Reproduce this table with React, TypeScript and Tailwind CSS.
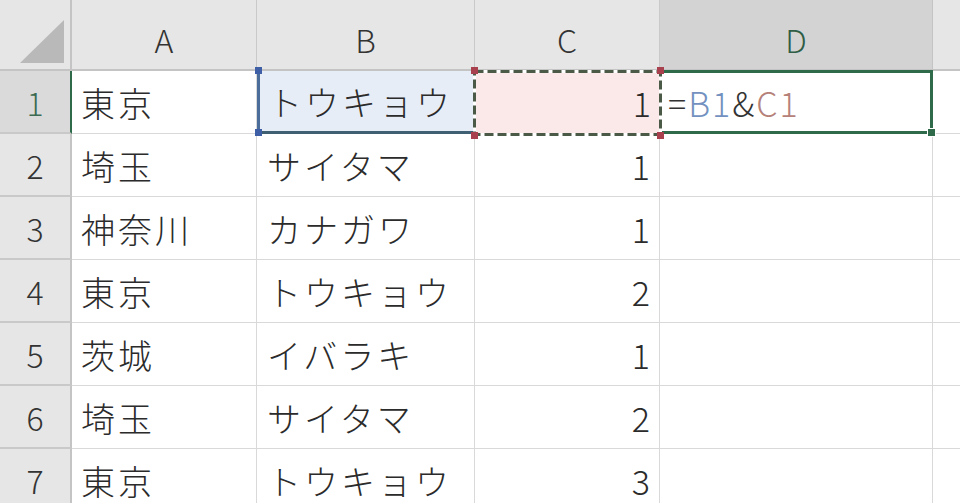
import React from 'react';

const font = { fontFamily: '"Noto Sans CJK JP", "Noto Sans", sans-serif' };

const rows: [string, string, string][] = [
  ['東京', 'トウキョウ', '1'],
  ['埼玉', 'サイタマ', '1'],
  ['神奈川', 'カナガワ', '1'],
  ['東京', 'トウキョウ', '2'],
  ['茨城', 'イバラキ', '1'],
  ['埼玉', 'サイタマ', '2'],
  ['東京', 'トウキョウ', '3'],
];

// small square handle on a reference border corner
const Handle = ({ className }: { className: string }) => (
  <div className={`absolute w-[7px] h-[7px] z-30 ${className}`} />
);

const App = () => {
  return (
    <div className="w-[960px] h-[503px] overflow-hidden bg-white text-[#2b2b2b] font-light" style={font}>
      <div className="grid grid-cols-[72px_185px_218px_185px_273px_1fr] grid-rows-[71px_repeat(7,63px)]">
        {/* column headers */}
        <div className="bg-[#e6e6e6] border-r-2 border-b-2 border-[#c4c4c4] flex items-end justify-end pr-[6px] pb-[6px]">
          <svg width="44" height="43">
            <polygon points="0,43 44,43 44,0" fill="#b9b9b9" />
          </svg>
        </div>
        {['A', 'B', 'C'].map((c) => (
          <div
            key={c}
            className="bg-[#e6e6e6] border-r border-b-2 border-r-[#c9c9c9] border-b-[#c4c4c4] flex items-center justify-center pt-[8px] text-[32px] text-[#333]"
          >
            {c}
          </div>
        ))}
        <div className="bg-[#d3d3d3] border-r border-b-2 border-r-[#c4c4c4] border-b-[#c4c4c4] flex items-center justify-center pt-[8px] text-[32px] text-[#2f5d45]">
          D
        </div>
        <div className="bg-[#e6e6e6] border-b-2 border-[#c4c4c4]" />

        {rows.map(([a, b, c], i) => {
          const first = i === 0;
          return (
            <React.Fragment key={i}>
              <div
                className={`flex items-center justify-center text-[32px] border-b-2 border-r-2 border-b-[#c9c9c9] ${
                  first ? 'bg-[#dadada] text-[#3c6a52] border-r-[#2f6b4b]' : 'bg-[#e6e6e6] text-[#333] border-r-[#c4c4c4]'
                }`}
              >
                {i + 1}
              </div>
              <div className="flex items-center pl-[9px] text-[34px] tracking-[3px] border-r border-b border-[#d9d9d9]">{a}</div>
              {first ? (
                <div className="relative flex items-center pl-[8px] text-[34px] tracking-[3px] bg-[#e7edf7] border-l-[3px] border-b-[3px] border-r border-l-[#4b6d9a] border-b-[#3f6073] border-r-[#d9d9d9]">
                  {b}
                  <Handle className="-left-[5px] -top-[4px] bg-[#3e5fa5]" />
                  <Handle className="-left-[5px] -bottom-[5px] bg-[#3e5fa5]" />
                </div>
              ) : (
                <div className="flex items-center pl-[10px] text-[34px] tracking-[3px] border-r border-b border-[#d9d9d9]">{b}</div>
              )}
              {first ? (
                <div className="relative flex items-center justify-end pr-[9px] text-[34px] bg-[#fbe9e9]">
                  {c}
                  <svg className="absolute inset-0 z-20 overflow-visible" width="185" height="63">
                    <rect x="-0.5" y="0.5" width="186" height="63" fill="none" stroke="#ffffff" strokeWidth="3" />
                    <rect x="-0.5" y="0.5" width="186" height="63" fill="none" stroke="#4a5a46" strokeWidth="3" strokeDasharray="9 4" />
                  </svg>
                  <Handle className="-left-[4px] -top-[4px] bg-[#a8404e]" />
                  <Handle className="-left-[4px] -bottom-[5px] bg-[#a8404e]" />
                  <Handle className="-right-[4px] -top-[4px] bg-[#a8404e]" />
                  <Handle className="-right-[4px] -bottom-[5px] bg-[#a8404e]" />
                </div>
              ) : (
                <div className="flex items-center justify-end pr-[9px] text-[34px] border-r border-b border-[#d9d9d9]">{c}</div>
              )}
              {first ? (
                <div className="relative flex items-center pl-[8px] text-[34px] tracking-[2px] border-t-[3px] border-r-[3px] border-b-[3px] border-[#2f6b4b] -mt-[1px]">
                  <span>
                    <span className="text-[#333]">=</span>
                    <span className="text-[#7391c0]">B1</span>
                    <span className="text-[#333]">&amp;</span>
                    <span className="text-[#b58178]">C1</span>
                  </span>
                  <div className="absolute -right-[6px] -bottom-[6px] w-[9px] h-[9px] bg-[#2f6b4b] border border-white z-30" />
                </div>
              ) : (
                <div className="border-r border-b border-[#d9d9d9]" />
              )}
              <div className="border-b border-[#d9d9d9]" />
            </React.Fragment>
          );
        })}
      </div>
    </div>
  );
};

export default App;
